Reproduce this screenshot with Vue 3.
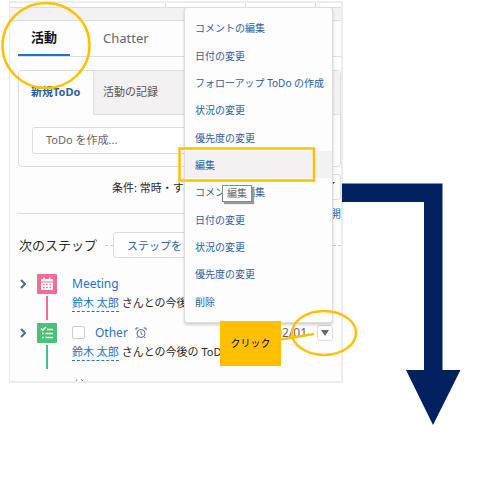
<script setup>
const menuItems = [
  'コメントの編集', '日付の変更', 'フォローアップ ToDo の作成', '状況の変更', '優先度の変更', '編集',
  'コメントの編集', '日付の変更', '状況の変更', '優先度の変更', '削除'
]
</script>

<template>
  <main class="page">
    <section class="panel">
      <div class="strip"><i></i><i></i><i></i><i></i></div>
      <div class="band"></div>
      <nav class="tabs">
        <button class="tab active" type="button">活動</button>
        <button class="tab" type="button">Chatter</button>
      </nav>

      <div class="card">
        <div class="subtabs">
          <button class="subtab on" type="button">新規ToDo</button>
          <button class="subtab" type="button">活動の記録</button>
        </div>
        <div class="composer">
          <input type="text" aria-label="ToDo を作成" placeholder="ToDo を作成...">
        </div>
      </div>

      <div class="filter">
        <span>条件: 常時・すべ</span>
        <button class="filter-btn" type="button" aria-label="条件">
          <svg width="8" height="5" viewBox="0 0 8 5"><path d="M0 0h8L4 5z" fill="#444" /></svg>
        </button>
      </div>
      <div class="expand"><a href="#">開</a></div>

      <div class="steps">
        <h2>次のステップ</h2>
        <i class="dash short"></i>
        <button class="more" type="button">ステップをさ</button>
        <i class="dash"></i>
      </div>

      <article class="item">
        <svg class="chev" width="6" height="10" viewBox="0 0 6 10"><path d="M1 1l4 4-4 4" /></svg>
        <div class="rail pink">
          <svg width="20" height="20" viewBox="0 0 20 20">
            <rect width="20" height="20" rx="1" fill="#ee6e94" />
            <path d="M5 5h10a1 1 0 0 1 1 1v1.500H4V6a1 1 0 0 1 1-1zM6.500 3.500h1.500v2H6.500zM12 3.500h1.500v2H12zM4 8.500h12V15a1 1 0 0 1-1 1H5a1 1 0 0 1-1-1z" fill="#fff" />
            <path d="M6 10.500h8M6 13.500h8" stroke="#ee6e94" stroke-width="1.500" stroke-dasharray="1.500 1.700" />
          </svg>
          <i></i>
        </div>
        <div class="body">
          <div class="title"><a href="#">Meeting</a></div>
          <p><a class="person" href="#">鈴木 太郎</a> さんとの今後</p>
        </div>
      </article>

      <article class="item">
        <svg class="chev" width="6" height="10" viewBox="0 0 6 10"><path d="M1 1l4 4-4 4" /></svg>
        <div class="rail green">
          <svg width="20" height="20" viewBox="0 0 20 20">
            <rect width="20" height="20" rx="1" fill="#4bc076" />
            <path d="M4 5.500l1.700 1.700L9 4M10 6.500h6M8.500 10.500H16M8.500 14.500H16M5 10.500h1.800M5 14.500h1.800" fill="none" stroke="#fff" stroke-width="1.600" />
          </svg>
          <i></i>
        </div>
        <div class="body">
          <div class="title">
            <input type="checkbox" aria-label="Other を完了">
            <a href="#">Other</a>
            <svg class="alarm" width="12" height="12" viewBox="0 0 12 12">
              <circle cx="6" cy="6.500" r="4" />
              <path d="M6 4.300v2.400l1.500.8M1 3.200V1h2.300M11 3.200V1H8.700M3 9.700l-1.400 1.500M9 9.700l1.400 1.500" />
            </svg>
            <time>02/01</time>
            <button class="arrow-btn" type="button" aria-label="アクションを表示">
              <svg width="10" height="6" viewBox="0 0 10 6"><path d="M1 0h8L5 6z" fill="#666" /></svg>
            </button>
          </div>
          <p><a class="person" href="#">鈴木 太郎</a> さんとの今後の ToDo</p>
        </div>
      </article>
      <svg class="cutoff" width="10" height="2" viewBox="0 0 10 2"><path d="M1 2l1-1.500M6 .5l2 1.500" /></svg>

      <div class="menu">
        <button v-for="(label, i) in menuItems" :key="i" type="button" :class="{ hover: i === 5 }">{{ label }}</button>
      </div>
      <span class="tooltip">編集</span>
    </section>

    <svg class="marks" width="488" height="480" viewBox="0 0 488 480">
      <path d="M342 183.500H442.500V370H460.500L433 425L406 370H424V202H342z" fill="#00205f" />
      <g fill="none" stroke="#ffc000" stroke-width="2.500">
        <ellipse cx="46" cy="45.500" rx="43.500" ry="42.500" />
        <rect x="179.500" y="148.500" width="134.500" height="32" />
        <ellipse cx="324" cy="333" rx="32" ry="22" />
        <path d="M280 339.500L314 334" />
      </g>
    </svg>
    <div class="callout">クリック</div>
  </main>
</template>

<style>
body { margin: 0; background: #fff; }
</style>

<style scoped>
* { box-sizing: border-box; }
.page {
  position: relative;
  min-height: 480px;
  padding: 1px 145px 0 9px;
  font-family: "Noto Sans", "Noto Sans CJK JP", sans-serif;
  font-size: 11px;
  color: #2b2826;
}
button { font: inherit; color: inherit; background: none; border: 0; padding: 0; margin: 0; white-space: nowrap; }
a { color: #2574c8; text-decoration: none; }
svg { display: block; flex: none; }
.panel {
  position: relative;
  border: 2px solid #ececec;
  border-left-width: 1px;
  background: #fdfdfd;
}
.strip { display: grid; grid-template-columns: 44px 112px 80px 70px; height: 4px; }
.strip i { border-right: 1px solid #ddd; }
.band { height: 14px; background: #f3f1f1; border-top: 1px solid #ddd; border-bottom: 1px solid #ddd; }
.tabs { display: flex; gap: 20px; height: 36px; margin-left: 8px; border-bottom: 1px solid #ddd; }
.tab { padding: 0 13px 2px; font-size: 13px; color: #666; }
.tab.active { font-weight: 700; color: #111; border-bottom: 2px solid #1c78c8; }
.card { margin: 13px 0 0 8px; border: 1px solid #ddd; border-radius: 4px; overflow: hidden; }
.subtabs { display: flex; height: 44px; }
.subtab { padding: 0 9px 4px; color: #555; flex: 1; text-align: left; background: #f3f1f1; border-left: 1px solid #ddd; border-bottom: 1px solid #ddd; }
.subtab.on { flex: 0 0 74px; padding: 0 0 4px 12px; font-weight: 700; color: #2d5f9e; background: #fdfdfd; border: 0; }
.composer { padding: 12px 28px 12px 13px; }
.composer input { display: block; width: 100%; height: 27px; border: 1px solid #ddd; border-radius: 3px; background: #fff; font: inherit; padding: 0 13px 2px; }
.composer input::placeholder { color: #666; opacity: 1; }
.filter { display: flex; justify-content: space-between; align-items: center; height: 28px; margin: 6px 0 0 102px; }
.filter-btn { display: flex; align-items: center; justify-content: flex-end; width: 40px; height: 26px; border: 1px solid #ddd; border-radius: 3px; padding: 0 5px 6px; }
.expand { height: 24px; margin-left: 8px; display: flex; align-items: center; justify-content: flex-end; }
.expand::before { content: ""; flex: 1; border-top: 1px solid #ddd; margin-right: 8px; }
.steps { display: flex; align-items: center; height: 26px; margin: 7px 0 0 9px; }
.steps h2 { margin: 0; font-size: 13px; font-weight: 400; line-height: 20px; white-space: nowrap; }
.dash { flex: 1; border-top: 1px dashed #ccc; }
.dash.short { flex: 0 0 8px; margin: 0 0 0 8px; }
.more { height: 26px; border: 1px solid #ddd; border-radius: 3px; padding: 0 13px; color: #2d5f9e; background: #fff; }
.item { display: flex; align-items: flex-start; margin: 0 0 0 10px; height: 49px; }
.steps + .item { margin-top: 16px; }
.chev { margin: 5px 11px 0 0; fill: none; stroke: #54698d; stroke-width: 2; }
.rail { display: flex; flex-direction: column; align-items: center; gap: 2px; width: 20px; flex: none; }
.rail i { width: 2px; height: 24px; }
.pink i { background: #ee6e94; }
.green i { background: #4bc076; }
.body { flex: 1; padding-left: 15px; min-width: 0; }
.title { display: flex; align-items: center; height: 19px; font-size: 12px; }
.title input { appearance: none; width: 13px; height: 13px; margin: 0 10px 0 0; border: 1px solid #ccc; border-radius: 2px; background: #fff; }
.alarm { margin-left: 7px; fill: none; stroke: #54698d; stroke-width: 1; }
.title time { margin-left: auto; color: #666; }
.arrow-btn { display: flex; align-items: center; justify-content: center; width: 16px; height: 16px; margin: 0 8px 0 10px; border: 1px solid #ddd; border-radius: 3px; background: #fff; }
.body p { margin: 0; line-height: 19px; white-space: nowrap; overflow: hidden; }
.person { display: inline-block; line-height: 16px; border-bottom: 1px dashed #2574c8; }
.cutoff { margin: 7px 0 0 65px; fill: none; stroke: #777; stroke-width: 1; }
.menu {
  position: absolute; top: 4px; right: 8px; bottom: 58px; width: 149px;
  display: grid; grid-template-columns: minmax(0, 1fr); grid-auto-rows: 1fr; padding: 6px 0 7px;
  border: 1px solid #ddd; border-radius: 3px; background: #fdfdfd;
  box-shadow: 0 2px 3px rgba(0, 0, 0, 0.18);
}
.menu button { text-align: left; padding: 0 10px; font-size: 10px; color: #2d5f9e; }
.menu .hover { background: #f3f1f1; }
.tooltip {
  position: absolute; top: 182px; right: 89px; width: 30px; height: 17px;
  border: 1px solid #888; background: #fff; box-shadow: 2px 2px 1px #999;
  font-size: 10px; line-height: 15px; text-align: center; color: #666;
}
.marks { position: absolute; left: 0; top: 0; }
.callout {
  position: absolute; left: 220px; top: 321px; width: 61px; height: 45px;
  background: #ffc000; color: #000; font-size: 10px; line-height: 45px; text-align: center;
}
</style>
